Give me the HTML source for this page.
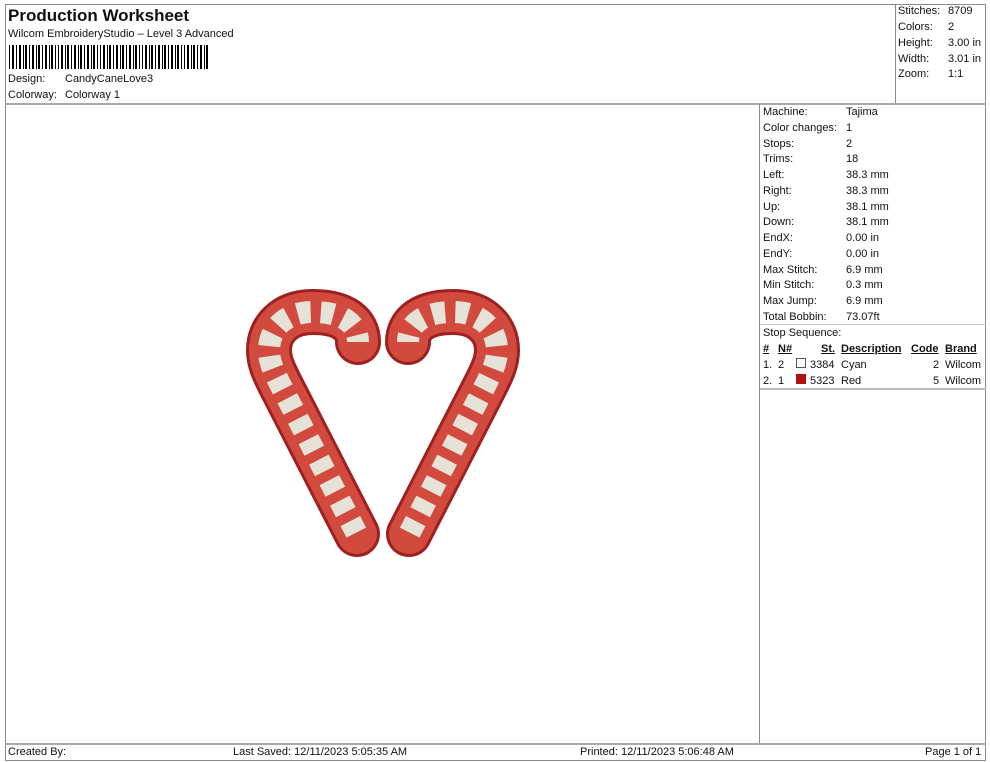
<!DOCTYPE html>
<html><head><meta charset="utf-8"><style>
*{margin:0;padding:0;box-sizing:border-box}
body{width:990px;height:762px;background:#fff;font-family:"Liberation Sans",Arial,sans-serif;color:#111;position:relative;overflow:hidden;font-size:11px}
.ab{position:absolute}
.l{position:absolute;background:#8a8a8a}
.t{position:absolute;white-space:nowrap;font-size:11px;line-height:13px}
</style></head><body>
<div class="l" style="left:5px;top:4px;width:981px;height:1px"></div>
<div class="l" style="left:5px;top:4px;width:1px;height:757px"></div>
<div class="l" style="left:985px;top:4px;width:1px;height:757px"></div>
<div class="l" style="left:5px;top:103px;width:981px;height:2px;background:#aaa"></div>
<div class="l" style="left:895px;top:4px;width:1px;height:99px"></div>
<div class="l" style="left:759px;top:104px;width:1px;height:640px"></div>
<div class="l" style="left:5px;top:743px;width:981px;height:2px;background:#aaa"></div>
<div class="l" style="left:5px;top:760px;width:981px;height:1px"></div>
<div class="l" style="left:760px;top:388px;width:226px;height:2px;background:#bbb"></div>

<div class="t" style="left:8px;top:6px;font-size:17px;line-height:20px;font-weight:bold">Production Worksheet</div>
<div class="t" style="left:8px;top:28px">Wilcom EmbroideryStudio – Level 3 Advanced</div>
<svg class="ab" style="left:9px;top:45px" width="200" height="24">
<g fill="#000">
<rect x="0" y="0" width="1" height="24"/><rect x="3" y="0" width="2" height="24"/><rect x="7" y="0" width="1" height="24"/><rect x="10" y="0" width="2" height="24"/><rect x="14" y="0" width="1" height="24"/><rect x="16" y="0" width="2" height="24"/><rect x="20" y="0" width="1" height="24"/><rect x="23" y="0" width="2" height="24"/><rect x="27" y="0" width="1" height="24"/><rect x="29" y="0" width="2" height="24"/><rect x="33" y="0" width="1" height="24"/><rect x="36" y="0" width="2" height="24"/><rect x="40" y="0" width="1" height="24"/><rect x="42" y="0" width="2" height="24"/><rect x="46" y="0" width="1" height="24"/><rect x="49" y="0" width="1" height="24"/><rect x="52" y="0" width="2" height="24"/><rect x="56" y="0" width="1" height="24"/><rect x="58" y="0" width="2" height="24"/><rect x="62" y="0" width="1" height="24"/><rect x="65" y="0" width="2" height="24"/><rect x="69" y="0" width="1" height="24"/><rect x="71" y="0" width="2" height="24"/><rect x="75" y="0" width="1" height="24"/><rect x="78" y="0" width="2" height="24"/><rect x="82" y="0" width="1" height="24"/><rect x="84" y="0" width="2" height="24"/><rect x="88" y="0" width="1" height="24"/><rect x="91" y="0" width="1" height="24"/><rect x="94" y="0" width="2" height="24"/><rect x="98" y="0" width="1" height="24"/><rect x="100" y="0" width="2" height="24"/><rect x="104" y="0" width="1" height="24"/><rect x="107" y="0" width="2" height="24"/><rect x="111" y="0" width="1" height="24"/><rect x="113" y="0" width="2" height="24"/><rect x="117" y="0" width="1" height="24"/><rect x="120" y="0" width="2" height="24"/><rect x="124" y="0" width="1" height="24"/><rect x="126" y="0" width="2" height="24"/><rect x="130" y="0" width="1" height="24"/><rect x="133" y="0" width="1" height="24"/><rect x="136" y="0" width="2" height="24"/><rect x="140" y="0" width="1" height="24"/><rect x="142" y="0" width="2" height="24"/><rect x="146" y="0" width="1" height="24"/><rect x="149" y="0" width="2" height="24"/><rect x="153" y="0" width="1" height="24"/><rect x="155" y="0" width="2" height="24"/><rect x="159" y="0" width="1" height="24"/><rect x="162" y="0" width="2" height="24"/><rect x="166" y="0" width="1" height="24"/><rect x="168" y="0" width="2" height="24"/><rect x="172" y="0" width="1" height="24"/><rect x="175" y="0" width="1" height="24"/><rect x="178" y="0" width="2" height="24"/><rect x="182" y="0" width="1" height="24"/><rect x="184" y="0" width="2" height="24"/><rect x="188" y="0" width="1" height="24"/><rect x="191" y="0" width="2" height="24"/><rect x="195" y="0" width="1" height="24"/><rect x="197" y="0" width="2" height="24"/>
</g></svg>
<div class="t" style="left:8px;top:73px">Design:</div><div class="t" style="left:65px;top:73px">CandyCaneLove3</div>
<div class="t" style="left:8px;top:89px">Colorway:</div><div class="t" style="left:65px;top:89px">Colorway 1</div>

<div class="t" style="left:898px;top:5px">Stitches:</div><div class="t" style="left:948px;top:5px">8709</div>
<div class="t" style="left:898px;top:21px">Colors:</div><div class="t" style="left:948px;top:21px">2</div>
<div class="t" style="left:898px;top:37px">Height:</div><div class="t" style="left:948px;top:37px">3.00 in</div>
<div class="t" style="left:898px;top:53px">Width:</div><div class="t" style="left:948px;top:53px">3.01 in</div>
<div class="t" style="left:898px;top:68px">Zoom:</div><div class="t" style="left:948px;top:68px">1:1</div>

<div class="ab" style="left:763px;top:106px">
<div style="position:relative">
<div class="t" style="top:0">Machine:</div><div class="t" style="left:83px;top:0">Tajima</div>
<div class="t" style="top:16px">Color changes:</div><div class="t" style="left:83px;top:16px">1</div>
<div class="t" style="top:32px">Stops:</div><div class="t" style="left:83px;top:32px">2</div>
<div class="t" style="top:47px">Trims:</div><div class="t" style="left:83px;top:47px">18</div>
<div class="t" style="top:63px">Left:</div><div class="t" style="left:83px;top:63px">38.3 mm</div>
<div class="t" style="top:79px">Right:</div><div class="t" style="left:83px;top:79px">38.3 mm</div>
<div class="t" style="top:95px">Up:</div><div class="t" style="left:83px;top:95px">38.1 mm</div>
<div class="t" style="top:110px">Down:</div><div class="t" style="left:83px;top:110px">38.1 mm</div>
<div class="t" style="top:126px">EndX:</div><div class="t" style="left:83px;top:126px">0.00 in</div>
<div class="t" style="top:142px">EndY:</div><div class="t" style="left:83px;top:142px">0.00 in</div>
<div class="t" style="top:158px">Max Stitch:</div><div class="t" style="left:83px;top:158px">6.9 mm</div>
<div class="t" style="top:173px">Min Stitch:</div><div class="t" style="left:83px;top:173px">0.3 mm</div>
<div class="t" style="top:189px">Max Jump:</div><div class="t" style="left:83px;top:189px">6.9 mm</div>
<div class="t" style="top:205px">Total Bobbin:</div><div class="t" style="left:83px;top:205px">73.07ft</div>
</div></div>
<div class="l" style="left:760px;top:324px;width:226px;height:1px;background:#ccc"></div>
<div class="t" style="left:763px;top:327px">Stop Sequence:</div>
<div class="t" style="left:763px;top:343px;font-weight:bold;text-decoration:underline">#</div>
<div class="t" style="left:778px;top:343px;font-weight:bold;text-decoration:underline">N#</div>
<div class="t" style="left:821px;top:343px;font-weight:bold;text-decoration:underline">St.</div>
<div class="t" style="left:841px;top:343px;font-weight:bold;text-decoration:underline">Description</div>
<div class="t" style="left:911px;top:343px;font-weight:bold;text-decoration:underline">Code</div>
<div class="t" style="left:945px;top:343px;font-weight:bold;text-decoration:underline">Brand</div>
<div class="t" style="left:763px;top:359px">1.</div><div class="t" style="left:778px;top:359px">2</div>
<div class="ab" style="left:796px;top:358px;width:10px;height:10px;border:1px solid #555;background:#fff"></div>
<div class="t" style="left:810px;top:359px">3384</div><div class="t" style="left:841px;top:359px">Cyan</div>
<div class="t" style="left:933px;top:359px">2</div><div class="t" style="left:945px;top:359px">Wilcom</div>
<div class="t" style="left:763px;top:375px">2.</div><div class="t" style="left:778px;top:375px">1</div>
<div class="ab" style="left:796px;top:374px;width:10px;height:10px;background:#b01010"></div>
<div class="t" style="left:810px;top:375px">5323</div><div class="t" style="left:841px;top:375px">Red</div>
<div class="t" style="left:933px;top:375px">5</div><div class="t" style="left:945px;top:375px">Wilcom</div>

<div class="t" style="left:8px;top:746px">Created By:</div>
<div class="t" style="left:233px;top:746px">Last Saved: 12/11/2023 5:05:35 AM</div>
<div class="t" style="left:580px;top:746px">Printed: 12/11/2023 5:06:48 AM</div>
<div class="t" style="left:925px;top:746px">Page 1 of 1</div>

<svg class="ab" style="left:0;top:0" width="990" height="762">
<defs>
<path id="c" d="M358 342 C358 324 343 312 313 312 C284 312 269 330 269 350 C269 362 274 372 280 384 L357 534"/>
</defs>
<g fill="none" stroke-linecap="round" stroke-linejoin="round">
<g>
<use href="#c" stroke="#9e2020" stroke-width="46"/>
<use href="#c" stroke="#d24a3e" stroke-width="40"/>
<use href="#c" stroke="#e6e2d8" stroke-width="22" stroke-dasharray="13 10" stroke-dashoffset="6" stroke-linecap="butt"/>
</g>
<g transform="translate(766 0) scale(-1 1)">
<use href="#c" stroke="#9e2020" stroke-width="46"/>
<use href="#c" stroke="#d24a3e" stroke-width="40"/>
<use href="#c" stroke="#e6e2d8" stroke-width="22" stroke-dasharray="13 10" stroke-dashoffset="6" stroke-linecap="butt"/>
</g>
</g>
</svg>
</body></html>
